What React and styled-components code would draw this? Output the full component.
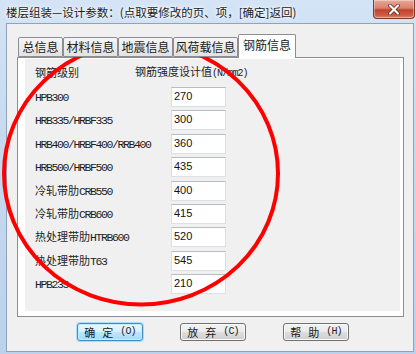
import React from "react";
import styled, { createGlobalStyle } from "styled-components";

const GlobalStyle = createGlobalStyle`
  html, body { margin: 0; padding: 0; background: #c6d9ef; }
  body { font-family: "Noto Sans CJK SC", "Liberation Sans", sans-serif; }
  * { box-sizing: border-box; }
`;

const Window = styled.div`
  position: relative;
  width: 416px;
  height: 354px;
  display: flex;
  flex-direction: column;
  background: linear-gradient(180deg, #d4e4f6 0%, #c6d9ef 40%, #bcd2ec 100%);
  overflow: hidden;
`;

const TitleBar = styled.div`
  height: 23px;
  flex: none;
  display: flex;
  justify-content: space-between;
  align-items: flex-start;
  padding-left: 6px;
  padding-right: 1px;
`;

const Title = styled.div`
  align-self: center;
  margin-top: 1px;
  font-family: "Noto Sans CJK SC", sans-serif;
  font-size: 11.5px;
  line-height: 14px;
  color: #1b1b1b;
  white-space: nowrap;
  text-shadow: 0 0 6px #ffffff, 0 0 3px #ffffff;
`;

const CloseButton = styled.div`
  width: 42px;
  height: 19px;
  display: flex;
  align-items: center;
  justify-content: center;
  border: 1px solid #7b3a2e;
  border-top: none;
  border-radius: 0 0 4px 4px;
  background: linear-gradient(180deg, #e9a99a 0%, #d8806c 45%, #c0432b 55%, #cf5c44 85%, #e0866e 100%);
  box-shadow: inset 0 0 0 1px rgba(255, 255, 255, 0.35);
`;

const Body = styled.div`
  flex: 1;
  margin: 0 2px 2px 6px;
  border: 1px solid #8fa3bb;
  background: #f0f0f0;
  padding: 10px 9px 10px 10px;
  display: flex;
  flex-direction: column;
`;

const TabStrip = styled.div`
  height: 23px;
  display: flex;
  align-items: flex-end;
  padding-left: 1px;
  position: relative;
  z-index: 1;
`;

const Tab = styled.div`
  width: ${(p) => p.$w}px;
  height: ${(p) => (p.$active ? 24 : 20)}px;
  margin-bottom: ${(p) => (p.$active ? -1 : 0)}px;
  border: 1px solid #8c8e94;
  border-bottom: ${(p) => (p.$active ? "none" : "1px solid #8c8e94")};
  border-radius: 2px 2px 0 0;
  background: ${(p) =>
    p.$active ? "#ffffff" : "linear-gradient(180deg, #f5f5f5 0%, #ececec 50%, #e2e2e2 100%)"};
  display: flex;
  align-items: ${(p) => (p.$active ? "flex-start" : "center")};
  padding-top: ${(p) => (p.$active ? 3 : 0)}px;
  justify-content: center;
  font-family: "Noto Sans CJK SC", sans-serif;
  font-size: 12px;
  line-height: 14px;
  color: #1a1a1a;
  white-space: nowrap;
`;

const Panel = styled.div`
  height: 260px;
  border: 1px solid #8c8e94;
  background: #ffffff;
  padding: 1px 3px 5px 7px;
  display: flex;
`;

const Page = styled.div`
  flex: 1;
  background: #f0f0f0;
  padding: 6px 0 0 10px;
  display: flex;
  flex-direction: column;
`;

const HeaderRow = styled.div`
  display: flex;
  height: 14px;
  align-items: center;
  margin-bottom: 8px;
`;

const HeaderCell = styled.div`
  width: ${(p) => p.$w || "auto"};
  font-family: "Noto Sans CJK SC", sans-serif;
  font-size: 11px;
  line-height: 14px;
  color: #1e1e1e;
  white-space: nowrap;
`;

const Code = styled.span`
  font-family: "Liberation Mono", "DejaVu Sans Mono", monospace;
  font-size: ${(p) => (p.$small ? 10 : 11.5)}px;
  letter-spacing: ${(p) => (p.$small ? -0.9 : -1.4)}px;
  color: #1e1e1e;
`;

const Grid = styled.div`
  display: grid;
  grid-template-columns: 136px 55px;
  grid-auto-rows: 20px;
  row-gap: 3.4px;
  align-items: center;
`;

const Label = styled.div`
  font-family: "Noto Sans CJK SC", sans-serif;
  font-size: 11px;
  line-height: 14px;
  color: #1e1e1e;
  white-space: nowrap;
`;

const ValueInput = styled.input`
  width: 55px;
  height: 20px;
  margin: 0;
  padding: 0 0 2px 2px;
  border: 1px solid #dcdfe4;
  border-top-color: #b9bcc2;
  background: #ffffff;
  font-family: "Liberation Sans", Arial, sans-serif;
  font-size: 11px;
  color: #111;
  outline: none;
`;

const ButtonRow = styled.div`
  display: flex;
  justify-content: flex-start;
  gap: 37px;
  margin-top: 6px;
  padding-left: 60px;
`;

const Button = styled.div`
  width: 66px;
  height: 18px;
  border: 1px solid ${(p) => (p.$default ? "#3c8fc4" : "#707070")};
  border-radius: 3px;
  background: ${(p) =>
    p.$default
      ? "linear-gradient(180deg, #eaf6fd 0%, #d9f0fc 50%, #bee6fd 51%, #a7d9f5 100%)"
      : "linear-gradient(180deg, #f2f2f2 0%, #ebebeb 50%, #dddddd 51%, #cfcfcf 100%)"};
  box-shadow: ${(p) =>
    p.$default ? "0 0 0 1px #a9dcf7, inset 0 0 0 1px #c8ebfc" : "inset 0 0 0 1px #fafafa"};
  display: flex;
  align-items: center;
  justify-content: center;
  gap: 7px;
  font-family: "Noto Sans CJK SC", sans-serif;
  font-size: 11px;
  line-height: 14px;
  color: #1a1a1a;
`;

const Overlay = styled.svg`
  position: absolute;
  left: 0;
  top: 0;
  pointer-events: none;
`;

const tabs = [
  { label: "总信息", w: 45 },
  { label: "材料信息", w: 55 },
  { label: "地震信息", w: 55 },
  { label: "风荷载信息", w: 65 },
  { label: "钢筋信息", w: 58, active: true },
];

const rows = [
  { cn: "", code: "HPB300", v: "270" },
  { cn: "", code: "HRB335/HRBF335", v: "300" },
  { cn: "", code: "HRB400/HRBF400/RRB400", v: "360" },
  { cn: "", code: "HRB500/HRBF500", v: "435" },
  { cn: "冷轧带肋", code: "CRB550", v: "400" },
  { cn: "冷轧带肋", code: "CRB600", v: "415" },
  { cn: "热处理带肋", code: "HTRB600", v: "520" },
  { cn: "热处理带肋", code: "T63", v: "545" },
  { cn: "", code: "HPB235", v: "210" },
];

const buttons = [
  { a: "确", b: "定", key: "O", def: true },
  { a: "放", b: "弃", key: "C" },
  { a: "帮", b: "助", key: "H" },
];

export default function App() {
  return (
    <>
      <GlobalStyle />
      <Window>
        <TitleBar>
          <Title>楼层组装—设计参数：(点取要修改的页、项，[确定]返回)</Title>
          <CloseButton>
            <svg width="12" height="11" viewBox="0 0 12 11">
              <path d="M2 1.5 L10 9.5 M10 1.5 L2 9.5" stroke="#5a1e14" strokeWidth="3.6" strokeLinecap="round" />
              <path d="M2 1.5 L10 9.5 M10 1.5 L2 9.5" stroke="#ffffff" strokeWidth="2.2" strokeLinecap="round" />
            </svg>
          </CloseButton>
        </TitleBar>
        <Body>
          <TabStrip>
            {tabs.map((t) => (
              <Tab key={t.label} $w={t.w} $active={t.active}>
                {t.label}
              </Tab>
            ))}
          </TabStrip>
          <Panel>
            <Page>
              <HeaderRow>
                <HeaderCell $w="100px">钢筋级别</HeaderCell>
                <HeaderCell>
                  钢筋强度设计值<Code $small>(N/mm2)</Code>
                </HeaderCell>
              </HeaderRow>
              <Grid>
                {rows.map((r, i) => (
                  <React.Fragment key={i}>
                    <Label>
                      {r.cn}
                      <Code>{r.code}</Code>
                    </Label>
                    <ValueInput value={r.v} readOnly />
                  </React.Fragment>
                ))}
              </Grid>
            </Page>
          </Panel>
          <ButtonRow>
            {buttons.map((b) => (
              <Button key={b.key} $default={b.def}>
                <span>{b.a}</span>
                <span>{b.b}</span>
                <Code $small>({b.key})</Code>
              </Button>
            ))}
          </ButtonRow>
        </Body>
        <Overlay width="416" height="354" viewBox="0 0 416 354">
          <ellipse cx="141" cy="173.5" rx="137" ry="131" fill="none" stroke="#ff0000" strokeWidth="4" />
        </Overlay>
      </Window>
    </>
  );
}
